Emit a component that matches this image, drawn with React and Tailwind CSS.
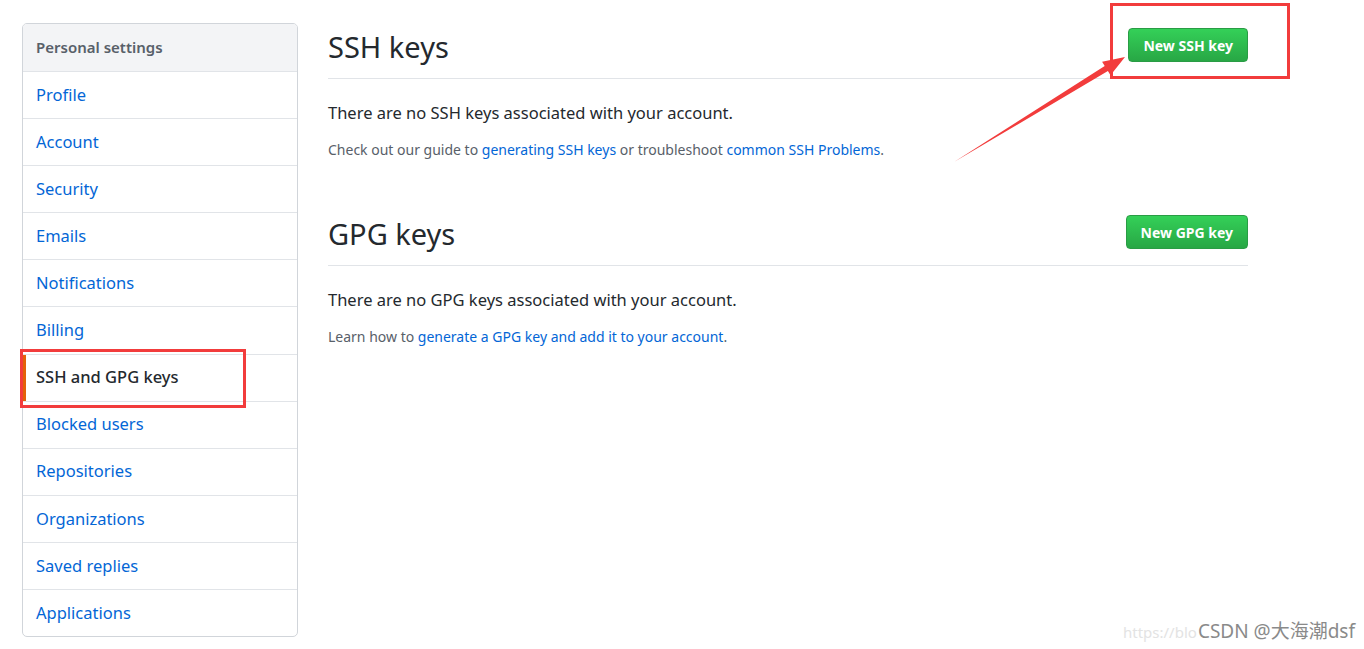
import React from "react";

const items = [
  "Profile",
  "Account",
  "Security",
  "Emails",
  "Notifications",
  "Billing",
  "SSH and GPG keys",
  "Blocked users",
  "Repositories",
  "Organizations",
  "Saved replies",
  "Applications",
];

const font = { fontFamily: '"Noto Sans", "Noto Sans CJK SC", sans-serif' };

const Section = ({ title, button, empty, children, first }) => (
  <div className={first ? "" : "mt-[50px]"}>
    <div className="flex justify-between items-start h-[56px] border-b border-[#e1e4e8]">
      <h2 className="text-[29px] leading-[48px] text-[#24292e] font-normal">{title}</h2>
      <button className="mt-[5px] h-[34px] px-[14px] rounded-[4px] border border-[#2a9c45] bg-gradient-to-b from-[#34d058] to-[#28a745] text-white text-[14px] font-bold">
        {button}
      </button>
    </div>
    <p className="mt-[22px] text-[16.5px] leading-[24px] text-[#24292e]">{empty}</p>
    <p className="mt-[15px] text-[14px] leading-[20px] text-[#586069]">{children}</p>
  </div>
);

export default function App() {
  return (
    <div className="relative w-[1364px] h-[649px] bg-white overflow-hidden" style={font}>
      <div className="flex pl-[22px] pt-[23px] gap-[30px]">
        <nav className="w-[276px] border border-[#d1d5da] rounded-[5px] overflow-hidden">
          <div className="h-[47px] bg-[#f3f4f6] pl-[13px] flex items-center text-[15px] font-semibold text-[#586069]">
            Personal settings
          </div>
          {items.map((it) => {
            const active = it === "SSH and GPG keys";
            return (
              <div
                key={it}
                className={
                  "h-[47.1px] border-t border-[#e1e4e8] pl-[13px] flex items-center text-[16.5px] " +
                  (active ? "text-[#24292e] font-medium shadow-[inset_3px_0_0_#e36209]" : "text-[#0366d6]")
                }
              >
                {it}
              </div>
            );
          })}
        </nav>

        <main className="w-[920px]">
          <Section first title="SSH keys" button="New SSH key" empty="There are no SSH keys associated with your account.">
            Check out our guide to <a className="text-[#0366d6]">generating SSH keys</a> or troubleshoot{" "}
            <a className="text-[#0366d6]">common SSH Problems</a>.
          </Section>
          <Section title="GPG keys" button="New GPG key" empty="There are no GPG keys associated with your account.">
            Learn how to <a className="text-[#0366d6]">generate a GPG key and add it to your account</a>.
          </Section>
        </main>
      </div>

      {/* annotations */}
      <div className="absolute left-[1110px] top-[3px] w-[180px] h-[76px] border-[3px] border-[#f23c3c]" />
      <div className="absolute left-[20px] top-[349px] w-[226px] h-[59px] border-[3px] border-[#f23c3c]" />
      <svg className="absolute left-0 top-0" width="1364" height="649">
        <polygon
          points="954,162 1104.7,65.9 1102.1,61.7 1125,57 1110.5,75.3 1107.9,71.1"
          fill="#f23c3c"
        />
      </svg>

      <div className="absolute left-[1123px] top-[617px] flex items-baseline whitespace-nowrap">
        <span className="text-[#e3e3e3] text-[15px]">https://blo</span>
        <span className="ml-[1px] text-[#8a8a8a] text-[19px]">CSDN @大海潮dsf</span>
      </div>
    </div>
  );
}
